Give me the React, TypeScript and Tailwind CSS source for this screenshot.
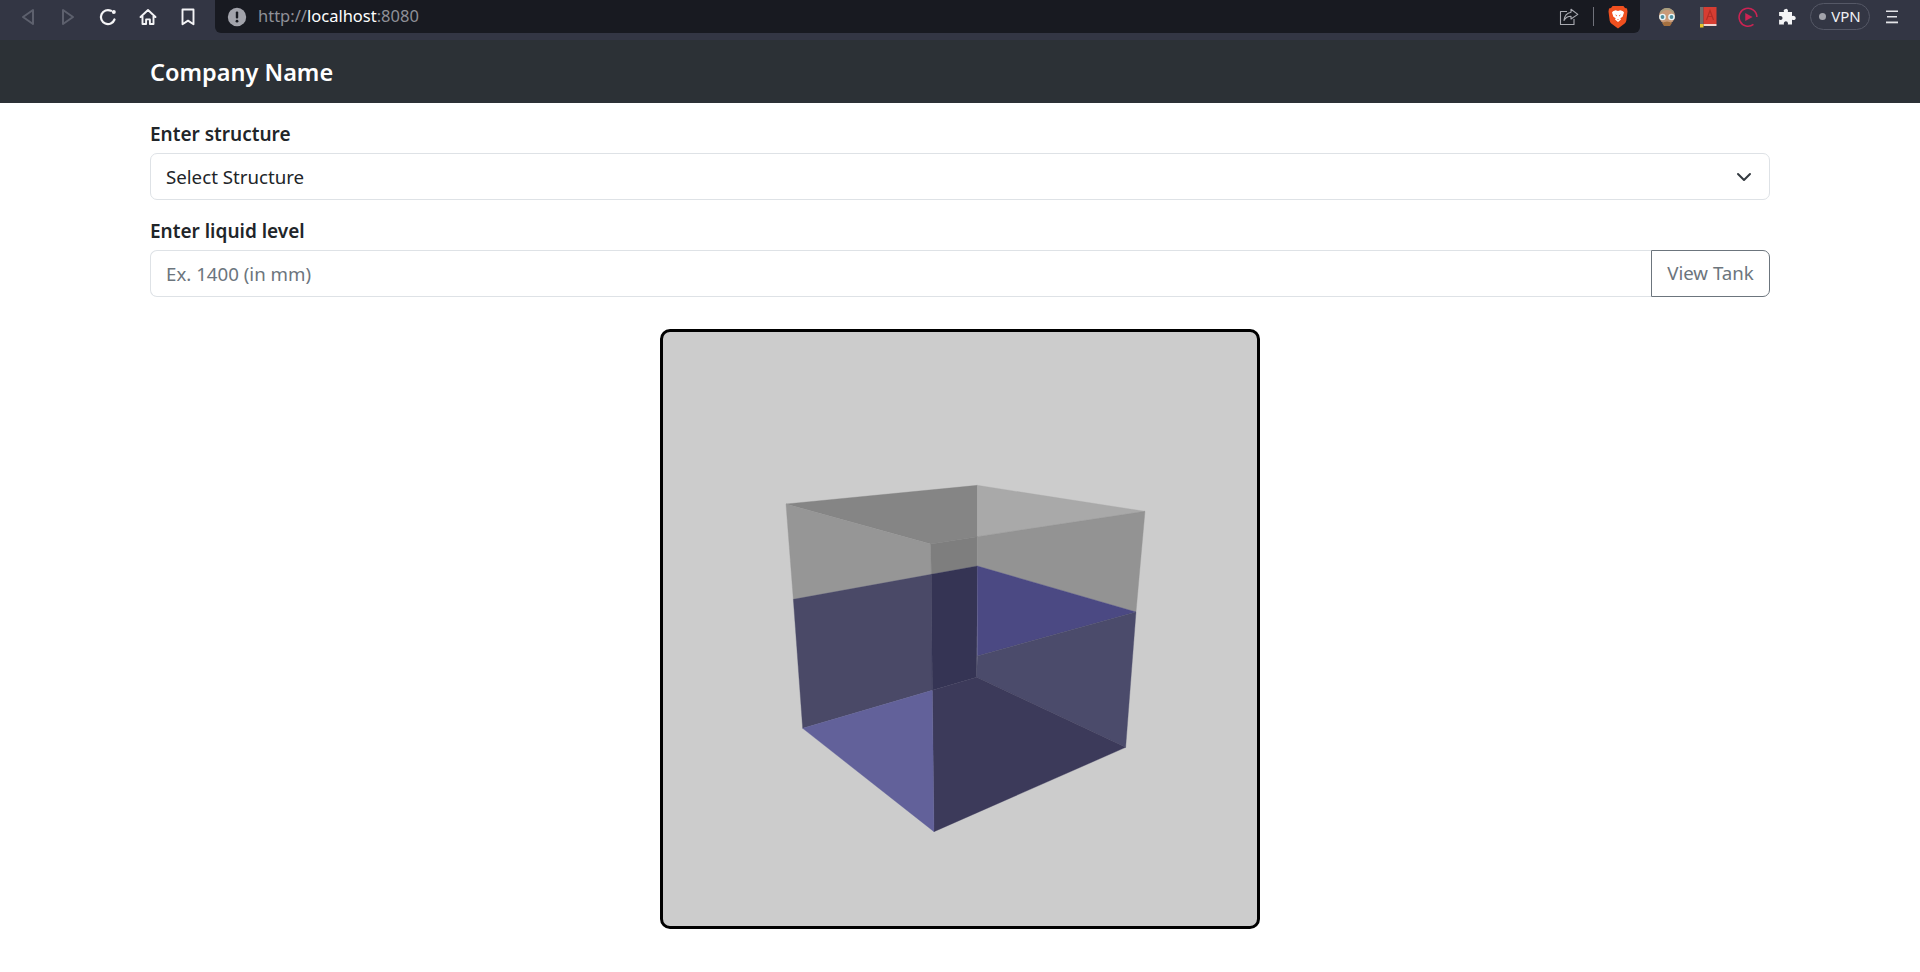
const FONT = "font-['Noto_Sans','Open_Sans',sans-serif]";

function BackIcon() {
  return (
    <svg width="14" height="18" viewBox="0 0 14 18" fill="none" stroke="#5d606d" strokeWidth="2" strokeLinejoin="round">
      <path d="M12 2v14L2 9z" />
    </svg>
  );
}

function ForwardIcon() {
  return (
    <svg width="14" height="18" viewBox="0 0 14 18" fill="none" stroke="#5d606d" strokeWidth="2" strokeLinejoin="round">
      <path d="M2 2v14l10-7z" />
    </svg>
  );
}

function ReloadIcon() {
  return (
    <svg width="18" height="18" viewBox="0 0 18 18" fill="none" stroke="#f4f4f6" strokeWidth="2.2" strokeLinecap="round">
      <path d="M15.500 11.500A7 7 0 1 1 12 2.800" />
      <circle cx="14.800" cy="4" r="2" fill="#f4f4f6" stroke="none" />
    </svg>
  );
}

function HomeIcon() {
  return (
    <svg width="18" height="18" viewBox="0 0 18 18" fill="none" stroke="#f4f4f6" strokeWidth="1.9" strokeLinejoin="round" strokeLinecap="round">
      <path d="M1.500 9 9 2l7.500 7M3.500 8v8h3.600v-4.600h3.800V16h3.600V8" />
    </svg>
  );
}

function BookmarkIcon() {
  return (
    <svg width="14" height="18" viewBox="0 0 14 18" fill="none" stroke="#f4f4f6" strokeWidth="1.9" strokeLinejoin="round">
      <path d="M1.500 1.500h11v14.800L7 12.600l-5.500 3.700z" />
    </svg>
  );
}

function AlertIcon() {
  return (
    <svg width="20" height="20" viewBox="0 0 20 20">
      <circle cx="10" cy="10" r="9.200" fill="#a2a3ab" />
      <rect x="8.800" y="4.500" width="2.400" height="7" rx="1" fill="#181a21" />
      <circle cx="10" cy="14.200" r="1.400" fill="#181a21" />
    </svg>
  );
}

function ShareIcon() {
  return (
    <svg width="20" height="18" viewBox="0 0 20 18" fill="none" stroke="#a9aab1" strokeWidth="1.100" strokeLinejoin="round">
      <path d="M8 3.500H1.500v13H15V11" />
      <path d="M12 1.200 18.800 6.400 12 11V8.300C8.600 8.300 6.600 9.600 5 12.400 5.400 8 7.600 5 12 4.200z" />
    </svg>
  );
}

function BraveIcon() {
  return (
    <svg width="20" height="24" viewBox="0 0 20 24">
      <path d="M4.600 1h10.800l1.600 2 2 .6.500 3-1.200 9.200q-.3 1.600-1.600 2.600L10 23.400 3.300 18.400Q2 17.400 1.700 15.800L.5 6.600l.5-3 2-.6z" fill="#f0501f" />
      <path d="M5 6.200 7.600 5.300 10 6l2.400-.7L15 6.200l1 1.400-1.400 4.200-2.300 1.400.7 1.300L10 17l-3-2.500.7-1.300-2.300-1.400L4 7.600z" fill="#fff" />
      <path d="M7.200 9.300 9 10.500l-.6 1zM12.800 9.300 11 10.500l.6 1zM9 14.300h2L10 15.300z" fill="#f0501f" />
    </svg>
  );
}

function AvatarIcon() {
  return (
    <svg width="20" height="20" viewBox="0 0 20 20">
      <circle cx="10" cy="9" r="8" fill="#c99a78" />
      <path d="M3 7q7-8 14 0v-2q-3-4-7-4T3 5z" fill="#a89f80" />
      <path d="M5 16q5-3 10 0l-2 3H7z" fill="#a5703f" />
      <circle cx="5.500" cy="10" r="3.300" fill="#e9f6f8" />
      <circle cx="14.500" cy="10" r="3.300" fill="#e9f6f8" />
      <circle cx="5.500" cy="10" r="1.900" fill="#4f8d9c" />
      <circle cx="14.500" cy="10" r="1.900" fill="#4f8d9c" />
    </svg>
  );
}

function BookIcon() {
  return (
    <svg width="18" height="22" viewBox="0 0 18 22">
      <rect x="1" y="1" width="3.500" height="18" fill="#6f6f6f" />
      <rect x="4.500" y="1" width="13" height="17" fill="#d73d32" />
      <rect x="4.500" y="18" width="13" height="2" fill="#f4d4cf" />
      <path d="M7.500 14 11 4.500l3.500 9.500M9 10.500h4" fill="none" stroke="#b52e26" strokeWidth="1.200" />
      <rect x="1" y="18" width="3.500" height="3.500" fill="#e8c528" />
    </svg>
  );
}

function PlayCircleIcon() {
  return (
    <svg width="22" height="22" viewBox="0 0 22 22" fill="none">
      <path d="M17 19A9.800 9.800 0 1 1 20.800 11" stroke="#cc2353" strokeWidth="1.700" />
      <path d="M8 6.500 16 11l-8 4.500z" fill="#cc2353" />
    </svg>
  );
}

function PuzzleIcon() {
  return (
    <svg width="18" height="18" viewBox="0 0 18 18" fill="#f4f4f6">
      <path d="M7 1.200q2.300-1.200 3 1.300l-.2 1.500h4.200v4l1.400-.3q2.700.4 2.300 2.900-.6 1.900-2.500 1.400l-1.200-.2v4.700H9.800l.2-1.300q-.3-2-2.300-1.900-1.900.3-1.900 2l.2 1.200H1.100v-4.900l1.200.3q2.200.1 2.300-2-.2-2-2.200-2l-1.300.2V4h4.900l-.3-1.300Q5.600 1.800 7 1.200z" />
    </svg>
  );
}

function MenuIcon() {
  return (
    <svg width="14" height="14" viewBox="0 0 14 14" fill="#e4e4e8">
      <rect x="1" y="0.500" width="12" height="1.500" />
      <rect x="2" y="6" width="10" height="1.500" />
      <rect x="1" y="11.500" width="12" height="1.800" />
    </svg>
  );
}

function BrowserBar() {
  return (
    <div className="flex h-10 bg-[#333644]">
      <div className="flex h-[33px] w-[215px] items-center pl-2">
        <span className="flex w-10 justify-center"><BackIcon /></span>
        <span className="flex w-10 justify-center"><ForwardIcon /></span>
        <span className="flex w-10 justify-center"><ReloadIcon /></span>
        <span className="flex w-10 justify-center"><HomeIcon /></span>
        <span className="flex w-10 justify-center"><BookmarkIcon /></span>
      </div>
      <div className="flex h-[33px] w-[1425px] items-center rounded-b-md bg-[#181a21] pl-3 pr-[12px]">
        <AlertIcon />
        <span className="ml-[11px] flex-1 text-[16.500px] text-[#8f9098]">
          http://<span className="text-white">localhost</span>:8080
        </span>
        <ShareIcon />
        <span className="ml-[14px] mr-[14px] h-[19px] w-px bg-[#70727b]" />
        <BraveIcon />
      </div>
      <div className="flex h-[33px] flex-1 items-center">
        <span className="ml-[17px] flex w-5 justify-center"><AvatarIcon /></span>
        <span className="ml-[21px] flex w-5 justify-center"><BookIcon /></span>
        <span className="ml-[20px] flex w-5 justify-center"><PlayCircleIcon /></span>
        <span className="ml-[19px] flex w-5 justify-center"><PuzzleIcon /></span>
        <span className="ml-[13px] flex h-[27px] w-[60px] items-center justify-center gap-[5px] rounded-full border border-[#555866] text-[15px] text-[#f0f0f4]">
          <span className="size-[7px] rounded-full bg-[#a2a3ab]" />
          VPN
        </span>
        <span className="ml-[15px]"><MenuIcon /></span>
      </div>
    </div>
  );
}

// cube faces, flat colours where the translucent sides overlap
const faces = [
  { pts: '78,102 652,46 652,200 512,222', fill: '#858585' },
  { pts: '652,46 1155,124 652,200', fill: '#a9a9a9' },
  { pts: '78,102 512,222 514,313 100,388', fill: '#969696' },
  { pts: '512,222 652,200 652,288 514,313', fill: '#7e7e7e' },
  { pts: '652,200 1155,124 1128,426 652,288', fill: '#939393' },
  { pts: '100,388 514,313 517,661 128,775', fill: '#4a4967' },
  { pts: '514,313 652,288 650,622 517,661', fill: '#353454' },
  { pts: '652,288 1128,426 652,558', fill: '#4b4983' },
  { pts: '652,558 1128,426 1097,832 650,622', fill: '#4b4b6b' },
  { pts: '517,661 650,622 1097,832 522,1085', fill: '#3c3a5a' },
  { pts: '128,775 517,661 522,1085', fill: '#62619a' },
];

function TankView() {
  return (
    <div className="mx-auto mt-8 size-[600px] overflow-hidden rounded-[10px] border-[3px] border-black bg-[#cccccc]">
      <svg width="594" height="594" viewBox="-291 -414 1782 1782">
        {faces.map((f) => (
          <polygon key={f.pts} points={f.pts} fill={f.fill} stroke={f.fill} strokeWidth="1" />
        ))}
      </svg>
    </div>
  );
}

export default function App() {
  return (
    <div className={`${FONT} min-h-[972px] bg-white`}>
      <BrowserBar />
      <nav className="flex h-[63px] items-center bg-[#2c3136] pl-[150px] pt-[2px]">
        <span className="text-[23.500px] font-semibold text-white">Company Name</span>
      </nav>
      <main className="mx-[150px] pt-4">
        <label htmlFor="structure" className="mb-1 block h-[30px] text-[19px] font-semibold leading-[30px] text-[#212529]">
          Enter structure
        </label>
        <div className="relative">
          <select
            id="structure"
            className="h-[47px] w-full appearance-none rounded-[7px] border border-[#dee2e6] bg-white px-[15px] pt-[2px] text-[18.700px] text-[#212529] outline-none"
          >
            <option>Select Structure</option>
          </select>
          <svg className="absolute right-[18px] top-[16px]" width="16" height="16" viewBox="0 0 16 16" fill="none" stroke="#343a40" strokeWidth="2" strokeLinecap="round" strokeLinejoin="round">
            <path d="m2 5 6 6 6-6" />
          </svg>
        </div>
        <label htmlFor="level" className="mb-1 mt-4 block h-[30px] text-[19px] font-semibold leading-[30px] text-[#212529]">
          Enter liquid level
        </label>
        <div className="flex">
          <input
            id="level"
            placeholder="Ex. 1400 (in mm)"
            className="h-[47px] min-w-0 flex-1 rounded-l-[7px] border border-r-0 border-[#dee2e6] bg-white px-[15px] text-[18.700px] text-[#212529] outline-none placeholder:text-[#6c757d]"
          />
          <button className="h-[47px] w-[119px] rounded-r-[7px] border border-[#6c757d] text-[18.700px] text-[#6c757d]">
            View Tank
          </button>
        </div>
        <TankView />
      </main>
    </div>
  );
}
